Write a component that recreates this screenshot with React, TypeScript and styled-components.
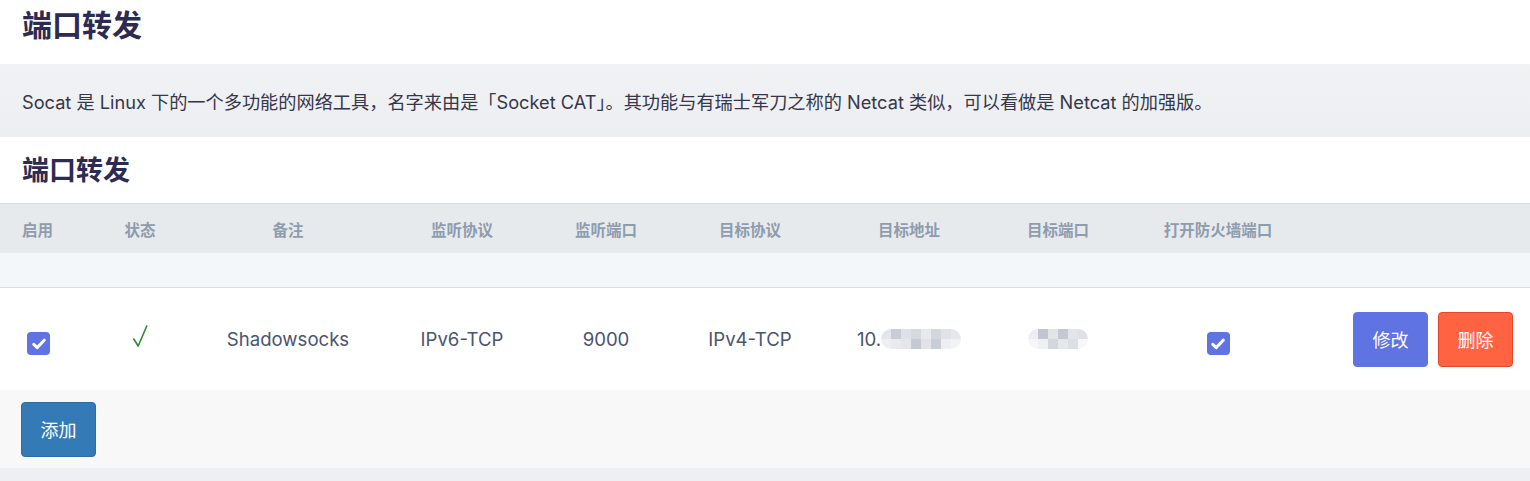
import React from 'react';
import styled, { createGlobalStyle } from 'styled-components';

const GlobalStyle = createGlobalStyle`
    html, body {
        margin: 0;
        padding: 0;
        background: #eeeff2;
        font-family: Inter, "Noto Sans CJK SC", sans-serif;
    }
`;

const COLUMNS = '103px 74px 222px 126px 162px 126px 192px 106px 214px 1fr';

export const Page = styled.div`
    width: 1530px;
    display: flex;
    flex-direction: column;
`;

export const Header = styled.header`
    height: 64px;
    display: flex;
    align-items: center;
    padding: 0 22px 18px;
    box-sizing: border-box;
    background: #fff;
`;

export const Title = styled.h1<{ $size: number }>`
    margin: 0;
    font-family: "Noto Sans CJK SC", sans-serif;
    font-size: ${p => p.$size}px;
    font-weight: 700;
    color: #2d2b52;
`;

export const Intro = styled.div`
    height: 73px;
    display: flex;
    align-items: center;
    padding: 0 22px;
    background: linear-gradient(#f1f2f4, #eceef1);
    font-size: 18.2px;
    color: #35364a;
`;

export const Section = styled.div`
    height: 66px;
    display: flex;
    align-items: center;
    padding: 0 22px 4px;
    box-sizing: border-box;
    background: #fff;
`;

export const Row = styled.div<{ $variant: 'head' | 'empty' | 'body' }>`
    display: grid;
    grid-template-columns: ${COLUMNS};
    align-items: center;
    height: ${p => (p.$variant === 'head' ? 49 : p.$variant === 'empty' ? 34 : 102)}px;
    background: ${p => (p.$variant === 'head' ? '#e7eaed' : p.$variant === 'empty' ? '#f4f7fa' : '#fff')};
    border-top: ${p => (p.$variant === 'head' ? '1px solid #dcdddf' : 'none')};
    border-bottom: ${p => (p.$variant === 'empty' ? '1px solid #dcdddf' : 'none')};
`;

export const HeadCell = styled.div<{ $align?: 'left' | 'center' }>`
    text-align: ${p => p.$align || 'center'};
    padding-left: ${p => (p.$align === 'left' ? '22px' : '0')};
    font-family: "Noto Sans CJK SC", sans-serif;
    font-size: 15.5px;
    font-weight: 700;
    color: #8e9cae;
`;

export const Cell = styled.div<{ $align?: 'left' | 'center' | 'right' }>`
    display: flex;
    align-items: center;
    justify-content: ${p => (p.$align === 'left' ? 'flex-start' : p.$align === 'right' ? 'flex-end' : 'center')};
    padding-left: ${p => (p.$align === 'left' ? '27px' : '0')};
    padding-right: ${p => (p.$align === 'right' ? '17px' : '0')};
    gap: 10px;
    font-size: 18.6px;
    color: #4b5470;
`;

export const Check = styled.span`
    width: 23px;
    height: 23px;
    margin-top: 9px;
    border-radius: 4px;
    background: #5f73e3;
    display: inline-flex;
    align-items: center;
    justify-content: center;
`;

export const Tick = styled.span`
    display: inline-flex;
    margin-top: -6px;
`;

export const Masked = styled.span`
    display: inline-flex;
    align-items: center;
`;

export const Blur = styled.span<{ $width: number }>`
    display: inline-grid;
    grid-template-columns: repeat(${p => p.$width / 10}, 10px);
    grid-auto-rows: 10px;
    border-radius: 10px;
    overflow: hidden;
    filter: blur(0.6px);
`;

export const Pixel = styled.span<{ $shade: string }>`
    background: ${p => p.$shade};
`;

export const Button = styled.button<{ $tone: 'primary' | 'danger' | 'info' }>`
    width: 75px;
    height: 55px;
    border-radius: 4px;
    font-family: "Noto Sans CJK SC", sans-serif;
    font-size: 18px;
    color: #fff;
    cursor: pointer;
    background: ${p => (p.$tone === 'primary' ? '#5f73e3' : p.$tone === 'danger' ? '#ff6342' : '#337ab7')};
    border: 1px solid ${p => (p.$tone === 'primary' ? '#5f73e3' : p.$tone === 'danger' ? '#e4472b' : '#2e6da4')};
`;

export const Footer = styled.div`
    height: 78px;
    display: flex;
    align-items: center;
    padding: 0 21px;
    background: #f8f8f8;
`;

const addrShades = [
    '#e3e5ea', '#c8ccd5', '#dfe1e6', '#d6d9e0', '#e8e9ed', '#d3d6dd', '#e0e2e7', '#e6e7eb',
    '#eeeff2', '#e9eaee', '#e4e6ea', '#c5c9d2', '#e1e3e8', '#c9cdd6', '#eceef1', '#f2f3f5',
];
const portShades = [
    '#eceef1', '#c0c5cf', '#e2e4e9', '#c3c8d1', '#e3e5ea', '#dfe1e6',
    '#f6f6f8', '#eff0f3', '#d3d6dd', '#e5e7eb', '#dcdfe4', '#f7f7f9',
];

const CheckBox = () => (
    <Check>
        <svg width="14" height="12" viewBox="0 0 14 12">
            <path d="M1.8 6.4 L5.2 9.6 L12.2 2.2" fill="none" stroke="#fff" strokeWidth="3" strokeLinecap="round" strokeLinejoin="round" />
        </svg>
    </Check>
);

const headers = ['备注', '监听协议', '监听端口', '目标协议', '目标地址', '目标端口', '打开防火墙端口'];

export default function App() {
    return (
        <Page>
            <GlobalStyle />
            <Header>
                <Title $size={30}>端口转发</Title>
            </Header>
            <Intro>
                Socat 是 Linux 下的一个多功能的网络工具，名字来由是「Socket CAT」。其功能与有瑞士军刀之称的 Netcat 类似，可以看做是 Netcat 的加强版。
            </Intro>
            <Section>
                <Title $size={27}>端口转发</Title>
            </Section>
            <Row $variant="head">
                <HeadCell $align="left">启用</HeadCell>
                <HeadCell>状态</HeadCell>
                {headers.map(h => <HeadCell key={h}>{h}</HeadCell>)}
                <HeadCell />
            </Row>
            <Row $variant="empty" />
            <Row $variant="body">
                <Cell $align="left"><CheckBox /></Cell>
                <Cell>
                    <Tick>
                        <svg width="16" height="24" viewBox="0 0 16 24">
                            <path d="M1.5 14.5 L6.2 22 L15 1.5" fill="none" stroke="#2a8c2e" strokeWidth="1.6" strokeLinejoin="round" />
                        </svg>
                    </Tick>
                </Cell>
                <Cell>Shadowsocks</Cell>
                <Cell>IPv6-TCP</Cell>
                <Cell>9000</Cell>
                <Cell>IPv4-TCP</Cell>
                <Cell>
                    <Masked>
                        10.
                        <Blur $width={80}>
                            {addrShades.map((c, i) => <Pixel key={i} $shade={c} />)}
                        </Blur>
                    </Masked>
                </Cell>
                <Cell>
                    <Blur $width={60}>
                        {portShades.map((c, i) => <Pixel key={i} $shade={c} />)}
                    </Blur>
                </Cell>
                <Cell><CheckBox /></Cell>
                <Cell $align="right">
                    <Button $tone="primary">修改</Button>
                    <Button $tone="danger">删除</Button>
                </Cell>
            </Row>
            <Footer>
                <Button $tone="info">添加</Button>
            </Footer>
        </Page>
    );
}
